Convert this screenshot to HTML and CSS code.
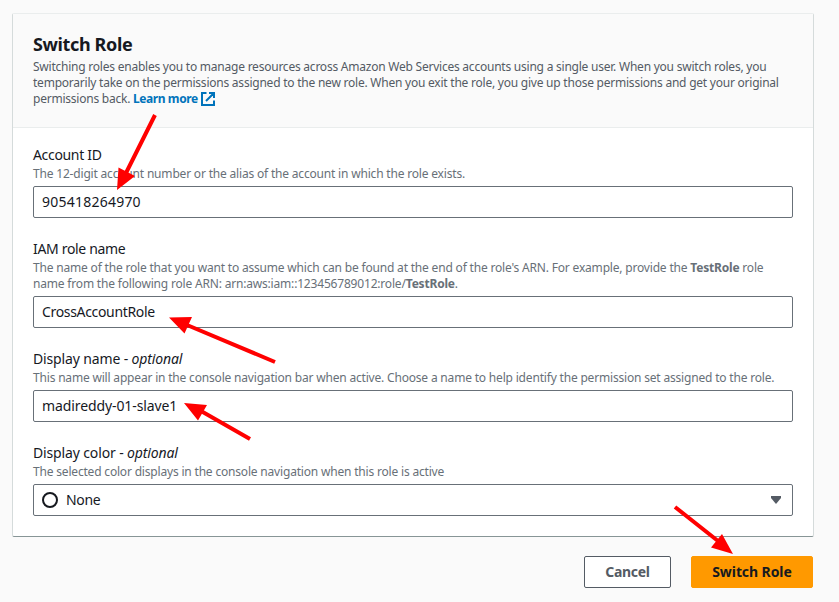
FILE: index.html
```html
<!DOCTYPE html>
<html lang="en">
<head>
<meta charset="utf-8">
<title>Switch Role</title>
<link rel="stylesheet" href="styles.css">
</head>
<body>
<main class="page">
  <section class="card">
    <header class="card-header">
      <h1>Switch Role</h1>
      <p>Switching roles enables you to manage resources across Amazon Web Services accounts using a single user. When you switch roles, you<br>temporarily take on the permissions assigned to the new role. When you exit the role, you give up those permissions and get your original<br>permissions back. <a class="link">Learn more <svg class="ext" viewBox="0 0 14 14"><path d="M5.500 1H1v12h12V8.500M8 1h5v5M13 1 5 9"/></svg></a></p>
    </header>
    <form class="fields">
      <div class="field">
        <label class="tight">Account ID</label>
        <p>The 12-digit account number or the alias of the account in which the role exists.</p>
        <div class="input digits">905418264970</div>
      </div>
      <div class="field">
        <label class="tight">IAM role name</label>
        <p>The name of the role that you want to assume which can be found at the end of the role's ARN. For example, provide the <b>TestRole</b> role<br>name from the following role ARN: arn:aws:iam::123456789012:role/<b>TestRole</b>.</p>
        <div class="input tight">CrossAccountRole</div>
      </div>
      <div class="field">
        <label>Display name - <i>optional</i></label>
        <p>This name will appear in the console navigation bar when active. Choose a name to help identify the permission set assigned to the role.</p>
        <div class="input">madireddy-01-slave1</div>
      </div>
      <div class="field">
        <label>Display color - <i>optional</i></label>
        <p>The selected color displays in the console navigation when this role is active</p>
        <div class="input select tight"><span class="swatch"></span><span>None</span><svg class="caret" viewBox="0 0 10 8"><path d="M0 0h10v2L5 8 0 2z"/></svg></div>
      </div>
    </form>
  </section>
  <div class="actions">
    <button class="btn cancel">Cancel</button>
    <button class="btn primary">Switch Role</button>
  </div>
</main>
<svg class="arrows" viewBox="0 0 839 602">
  <path class="shaft" d="M155 115 125 175M275 362 187 325M250 439 201 411M675 507 718 541"/>
  <path class="head" d="M117 190 118.500 167.500 135 176zM169 317.500 192 317 184.500 333.500zM184 403 207 405 198 420.500zM733 554 711 547.500 722 534z"/>
</svg>
</body>
</html>
```
FILE: styles.css
```css
* { box-sizing: border-box; }
body {
  margin: 0;
  height: 602px;
  overflow: hidden;
  background: #fafafa;
  color: #16191f;
  font: 14px/22px "Noto Sans", sans-serif;
}
.page { padding: 13px 25px 0 12px; }
.card {
  height: 524px;
  background: #fff;
  border: 1px solid #d5dbdb;
  border-top-color: #eaeded;
  border-bottom-color: #879596;
  border-radius: 2px;
}
.card-header {
  height: 114px;
  padding: 19px 20px 0;
  background: #fafafa;
  border-bottom: 1px solid #eaeded;
}
h1 { margin: 0; font-size: 18px; line-height: 22px; font-weight: 700; letter-spacing: -.37px; }
p { margin: 0; font-size: 12px; line-height: 16px; color: #687078; white-space: nowrap; letter-spacing: -.185px; }
.card-header p { margin-top: 4px; color: #545b64; letter-spacing: -.23px; }
.link { color: #0073bb; font-weight: 700; letter-spacing: -.42px; }
.ext { width: 14px; height: 14px; margin-left: 1px; vertical-align: -3px; fill: none; stroke: currentColor; stroke-width: 2; }
.fields { padding: 16px 20px 0; display: flex; flex-direction: column; gap: 20px; }
.field label { display: block; height: 22px; letter-spacing: -.14px; }
.input {
  height: 32px;
  margin-top: 4px;
  padding: 4px 8px;
  border: 1px solid #687078;
  border-radius: 2px;
  background: #fff;
  letter-spacing: -.1px;
}
.field .tight { letter-spacing: -.33px; }
.digits { letter-spacing: .23px; }
.select { display: flex; align-items: center; }
.swatch { width: 16px; height: 16px; margin-right: 8px; border: 2px solid #16191f; border-radius: 50%; }
.caret { width: 10px; height: 8px; margin-left: auto; margin-right: 3px; fill: #545b64; }
.actions { display: flex; justify-content: flex-end; gap: 20px; margin-top: 19px; padding-right: 1px; }
.btn {
  width: 122px;
  height: 32px;
  padding: 0;
  border: 1px solid #545b64;
  border-radius: 2px;
  background: #fff;
  color: #545b64;
  font: 700 14px/20px "Noto Sans", sans-serif;
  letter-spacing: -.08px;
}
.cancel { width: 87px; letter-spacing: -.3px; }
.primary { background: #ff9900; border-color: #ff9900; color: #16191f; }
.arrows { position: absolute; top: 0; left: 0; width: 839px; height: 602px; pointer-events: none; }
.shaft { stroke: #f00; stroke-width: 4; fill: none; }
.head { fill: #f00; }
```
